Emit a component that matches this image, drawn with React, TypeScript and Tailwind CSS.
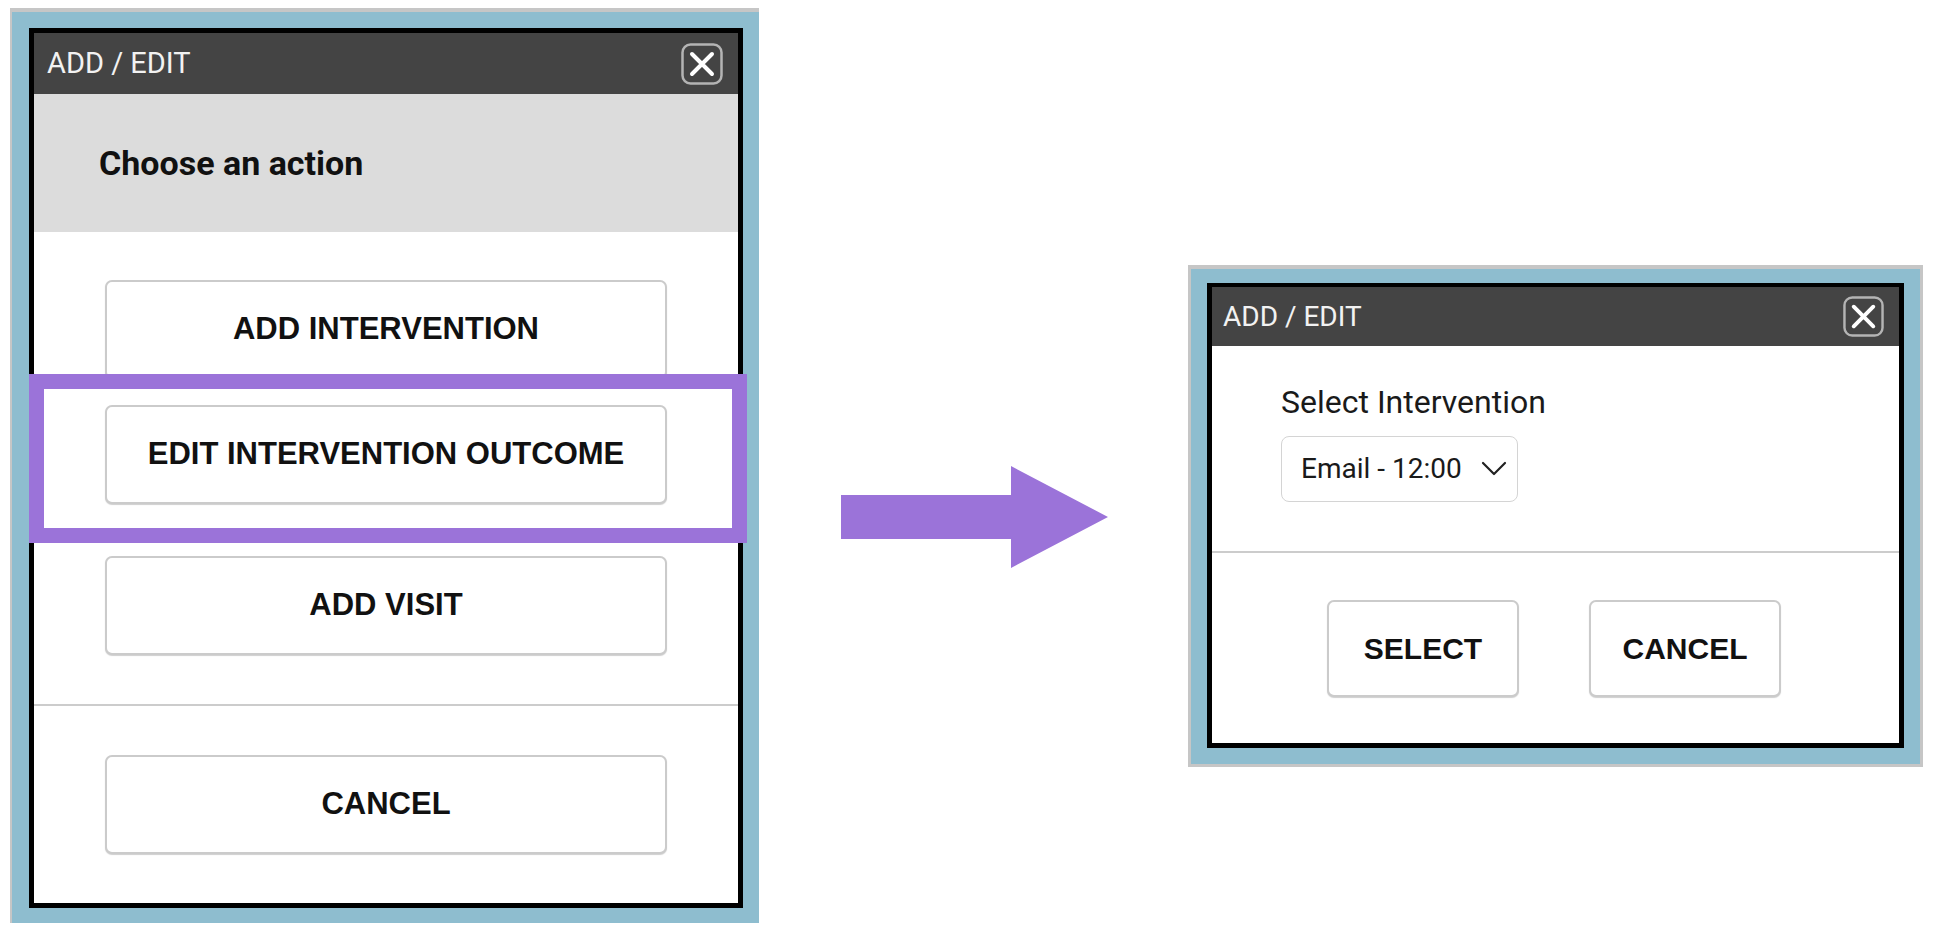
import React from "react";

const CloseIcon: React.FC<{ size: number }> = ({ size }) => (
  <svg width={size} height={size} viewBox="0 0 42 42" className="shrink-0">
    <rect x="1.5" y="1.5" width="39" height="39" rx="8" fill="none" stroke="#b4b4b4" strokeWidth="2.5" />
    <path d="M11 11 L31 31 M31 11 L11 31" stroke="#ffffff" strokeWidth="4" strokeLinecap="round" />
  </svg>
);

const ActionButton: React.FC<{ label: string; className?: string }> = ({ label, className }) => (
  <button
    className={`flex w-full h-[99px] items-center justify-center rounded-[7px] border-2 border-[#cbcbcb] bg-white shadow-[0_1px_1px_#cfcfcf] font-['Liberation_Sans',Arial,sans-serif] text-[31px] font-bold text-[#111] ${className ?? ""}`}
  >
    {label}
  </button>
);

const SmallButton: React.FC<{ label: string }> = ({ label }) => (
  <button className="flex w-[192px] h-[97px] items-center justify-center rounded-[7px] border-2 border-[#cbcbcb] bg-white shadow-[0_1px_1px_#cfcfcf] font-['Liberation_Sans',Arial,sans-serif] text-[30px] font-bold text-[#111]">
    {label}
  </button>
);

const ChooseAction: React.FC = () => (
  <div className="relative mt-[8px] w-[749px] shrink-0 border-t-4 border-l-2 border-[#c6c6c6] bg-[#8ebdcf] pt-[16px] pl-[17px] pr-[16px] pb-[15px]">
    <div className="flex flex-col border-[5px] border-black bg-white">
      <div className="flex h-[61px] items-center justify-between bg-[#444444] pl-[13px] pr-[15px]">
        <span className="font-['Roboto',sans-serif] text-[29px] leading-none text-[#f2f2f2]">ADD / EDIT</span>
        <CloseIcon size={42} />
      </div>
      <div className="flex h-[138px] items-center bg-[#dcdcdc] pl-[65px]">
        <span className="font-['Roboto',sans-serif] text-[34px] font-bold leading-none text-[#111]">Choose an action</span>
      </div>
      <div className="flex flex-col px-[71px] pt-[48px] pb-[49px]">
        <ActionButton label="ADD INTERVENTION" />
        <ActionButton label="EDIT INTERVENTION OUTCOME" className="mt-[26px]" />
        <ActionButton label="ADD VISIT" className="mt-[52px]" />
      </div>
      <div className="h-[2px] bg-[#cccccc]" />
      <div className="flex flex-col px-[71px] pt-[49px] pb-[49px]">
        <ActionButton label="CANCEL" />
      </div>
    </div>
    {/* highlight round the selected option */}
    <div className="absolute left-[17px] top-[362px] h-[169px] w-[718px] border-[15px] border-[#9b73d9]" />
  </div>
);

const Arrow: React.FC = () => (
  <svg width="267" height="102" viewBox="0 0 267 102" className="ml-[82px] mt-[466px] shrink-0">
    <polygon points="0,29 170,29 170,0 267,51 170,102 170,73 0,73" fill="#9b73d9" />
  </svg>
);

const SelectIntervention: React.FC = () => (
  <div className="ml-[80px] mt-[265px] w-[735px] shrink-0 border-[3px] border-t-4 border-[#c6c6c6] bg-[#8ebdcf] pt-[14px] pl-[16px] pr-[16px] pb-[16px]">
    <div className="flex flex-col border-[5px] border-t-4 border-black bg-white">
      <div className="flex h-[59px] items-center justify-between bg-[#444444] pl-[11px] pr-[15px]">
        <span className="font-['Roboto',sans-serif] text-[28px] leading-none text-[#f2f2f2]">ADD / EDIT</span>
        <CloseIcon size={41} />
      </div>
      <div className="flex flex-col items-start pl-[69px] pt-[40px] pb-[49px]">
        <span className="font-['Roboto',sans-serif] text-[32px] leading-none text-[#1a1a1a]">Select Intervention</span>
        <div className="mt-[18px] flex h-[66px] w-[237px] items-center justify-between rounded-[8px] border border-[#d4d4d4] bg-white pl-[19px] pr-[10px]">
          <span className="font-['Roboto',sans-serif] text-[28px] leading-none text-[#1a1a1a]">Email - 12:00</span>
          <svg width="26" height="16" viewBox="0 0 26 16">
            <path d="M2 2 L13 13 L24 2" fill="none" stroke="#222" strokeWidth="2.2" strokeLinecap="round" strokeLinejoin="round" />
          </svg>
        </div>
      </div>
      <div className="h-[2px] bg-[#cccccc]" />
      <div className="flex justify-center gap-[70px] pr-[3px] pt-[47px] pb-[46px]">
        <SmallButton label="SELECT" />
        <SmallButton label="CANCEL" />
      </div>
    </div>
  </div>
);

export default function App() {
  return (
    <div className="flex min-h-[938px] w-[1936px] items-start bg-white pl-[10px]">
      <ChooseAction />
      <Arrow />
      <SelectIntervention />
    </div>
  );
}
